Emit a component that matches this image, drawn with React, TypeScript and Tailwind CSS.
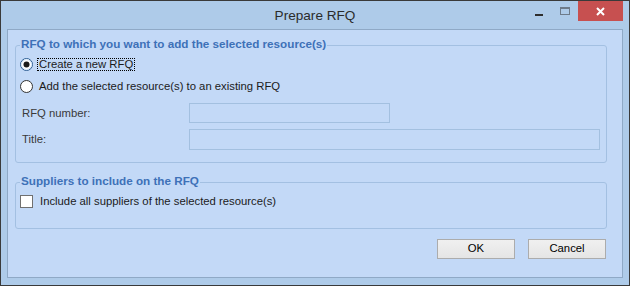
import React from "react";

const font = { fontFamily: '"Liberation Sans", Arial, sans-serif' };

function Radio({ checked }: { checked?: boolean }) {
  return (
    <svg width="13" height="13" viewBox="0 0 13 13" className="shrink-0">
      <circle cx="6.5" cy="6.5" r="6" fill="#ffffff" stroke={checked ? "#2c5d93" : "#333333"} strokeWidth="1" />
      {checked && <circle cx="6.5" cy="6.5" r="5" fill="none" stroke="#cfe3f8" strokeWidth="1" />}
      {checked && <circle cx="6.5" cy="6.5" r="3" fill="#1a1a1a" />}
    </svg>
  );
}

export default function App() {
  return (
    <div
      className="relative w-[630px] h-[286px] bg-[#aecbe9] border border-[#3a3a3a] flex flex-col text-[11.3px] text-[#1b1b1b]"
      style={font}
    >
      {/* Title bar */}
      <div className="h-[28px] shrink-0 flex items-center justify-center">
        <span className="text-[13.6px] text-[#2b2b2b] leading-none mt-[1px]">Prepare RFQ</span>
      </div>
      <div className="absolute right-[6px] top-0 flex items-start">
        <div className="w-[26px] h-[20px] flex items-center justify-center">
          <div className="w-[8px] h-[2px] bg-[#2e2e2e] mt-[7px]" />
        </div>
        <div className="w-[26px] h-[20px] flex items-center justify-center">
          <div className="w-[10px] h-[8px] border border-[#6e7b8a] border-t-2 -mt-[1px]" />
        </div>
        <div className="w-[45px] h-[20px] bg-[#c75050] flex items-center justify-center">
          <svg width="9" height="9" viewBox="0 0 9 9">
            <path d="M1 1 L8 8 M8 1 L1 8" stroke="#ffffff" strokeWidth="2" />
          </svg>
        </div>
      </div>

      {/* Client area */}
      <div className="mx-[6px] h-[249px] border border-[#8fa9c6] bg-[#c3d9f7] flex flex-col">
        <fieldset className="ml-[7px] mr-[15px] mt-[6px] border border-[#a3c0e2] rounded-[3px] pb-[12px]">
          <legend className="ml-[4px] px-[1px] pb-[3px] leading-[16px] text-[11.7px] font-bold text-[#3e71b8]">
            RFQ to which you want to add the selected resource(s)
          </legend>
          <div className="mt-[2px] h-[14px] flex items-center pl-[4px]">
            <Radio checked />
            <span className="ml-[4px] border border-dotted border-black px-[1px] leading-[11px]">Create a new RFQ</span>
          </div>
          <div className="mt-[8px] h-[14px] flex items-center pl-[4px]">
            <Radio />
            <span className="ml-[6px]">Add the selected resource(s) to an existing RFQ</span>
          </div>
          <div className="mt-[10px] flex items-center">
            <span className="w-[173px] pl-[6px] text-[#3a3a3a]">RFQ number:</span>
            <div className="w-[201px] h-[20px] border border-[#a3c0e0]" />
          </div>
          <div className="mt-[6px] flex items-center">
            <span className="w-[173px] pl-[6px] text-[#3a3a3a]">Title:</span>
            <div className="w-[411px] h-[21px] border border-[#a3c0e0]" />
          </div>
        </fieldset>

        <fieldset className="ml-[7px] mr-[15px] mt-[10px] border border-[#a3c0e2] rounded-[3px] pb-[20px]">
          <legend className="ml-[4px] px-[1px] pb-[2px] leading-[16px] text-[11.7px] font-bold text-[#3e71b8]">
            Suppliers to include on the RFQ
          </legend>
          <div className="mt-[4px] h-[13px] flex items-center pl-[4px]">
            <div className="w-[13px] h-[13px] bg-white border border-[#707070] shrink-0" />
            <span className="ml-[7px]">Include all suppliers of the selected resource(s)</span>
          </div>
        </fieldset>

        <div className="mt-[10px] mr-[16px] flex justify-end gap-[13px]">
          <button className="w-[78px] h-[20px] border border-[#acacac] bg-gradient-to-b from-[#f0f0f0] to-[#e5e5e5] text-black leading-none">
            OK
          </button>
          <button className="w-[78px] h-[20px] border border-[#acacac] bg-gradient-to-b from-[#f0f0f0] to-[#e5e5e5] text-black leading-none">
            Cancel
          </button>
        </div>
      </div>
    </div>
  );
}
